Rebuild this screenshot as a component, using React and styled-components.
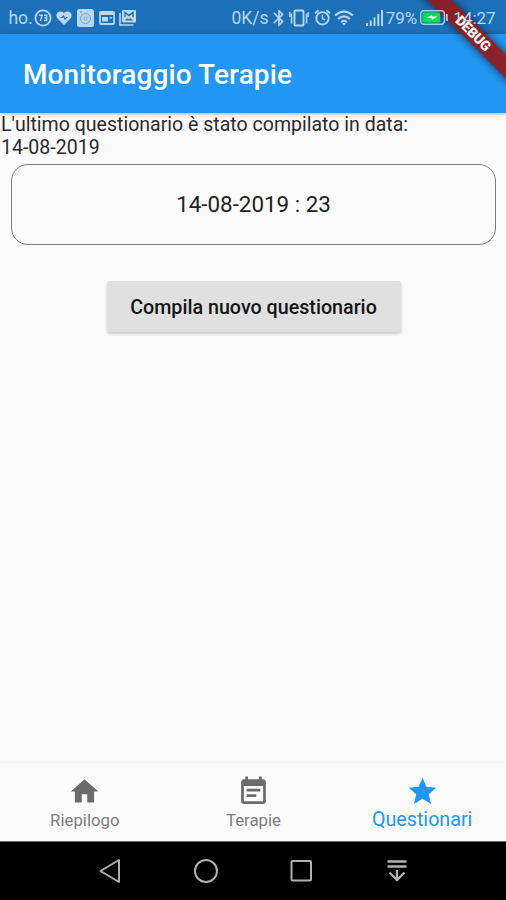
import React from "react";
import styled, { createGlobalStyle } from "styled-components";
import { MdHome, MdEventNote, MdStar, MdBluetooth } from "react-icons/md";

const GlobalStyle = createGlobalStyle`
  * {
    box-sizing: border-box;
  }

  body {
    margin: 0;
    background: #fafafa;
    font-family: Roboto, "Liberation Sans", sans-serif;
  }

  p, h1 {
    margin: 0;
  }

  svg {
    display: block;
    flex: none;
  }
`;

const Screen = styled.div`
  position: relative;
  display: flex;
  flex-direction: column;
  width: 506px;
  height: 900px;
  overflow: hidden;
  background: #fafafa;
`;

const StatusBarStyles = styled.header`
  display: flex;
  justify-content: space-between;
  height: 34px;
  padding: 0 11px 0 9px;
  background: #1b70b7;
  color: #b9d7f0;
`;

const StatusGroup = styled.div`
  position: relative;
  z-index: 2;
  display: flex;
  align-items: center;
  height: 35px;
`;

const StatusItem = styled.span`
  display: flex;
  justify-content: center;
  flex: none;
  width: ${(props) => props.$width}px;
  margin-left: ${(props) => props.$gap || 0}px;
  font-size: ${(props) => props.$size || 17.5}px;
  white-space: nowrap;
`;

const AppBar = styled.div`
  position: relative;
  display: flex;
  align-items: center;
  height: 79px;
  padding: 3px 0 0 23px;
  background: #2196f3;
  box-shadow: 0 1px 4px rgba(0, 0, 0, 0.3);

  h1 {
    color: white;
    font-size: 28px;
    font-weight: 500;
    line-height: 32px;
    letter-spacing: 0.12px;
    white-space: nowrap;
  }
`;

const Content = styled.main`
  display: flex;
  flex-direction: column;
  align-items: center;
  flex: 1;
`;

const LastEntry = styled.p`
  align-self: stretch;
  padding: 1px 0 0 1px;
  color: #2b2b2b;
  font-size: 19.55px;
  line-height: 22.5px;
`;

const EntryCard = styled.div`
  display: flex;
  align-items: center;
  justify-content: center;
  width: 485px;
  height: 81px;
  margin-top: 5px;
  padding: 0 0 2px 1px;
  border: 1.5px solid #808080;
  border-radius: 17px;
  color: #222;
  font-size: 22.4px;
`;

const RaisedButton = styled.button`
  width: 294px;
  height: 51px;
  margin: 36px 0 0 2px;
  padding: 1px 1px 0 0;
  border: 0;
  border-radius: 3px;
  background: #e0e0e0;
  box-shadow: 0 2px 3px rgba(0, 0, 0, 0.2);
  color: #151515;
  font-family: inherit;
  font-size: 19.7px;
  font-weight: 500;
  white-space: nowrap;
`;

const BottomNav = styled.nav`
  display: grid;
  grid-template-columns: repeat(3, 1fr);
  height: 78px;
  background: #fafafa;
  box-shadow: 0 -1px 2px rgba(0, 0, 0, 0.06);
`;

const NavItem = styled.a`
  display: flex;
  flex-direction: column;
  align-items: center;
  padding: 12px 0 0 1px;
  color: ${(props) => (props.$active ? "#2196f3" : "#6b6b6b")};

  span {
    margin-top: 1px;
    font-size: ${(props) => (props.$active ? 19.7 : 16.8)}px;
    line-height: 22px;
    color: ${(props) => (props.$active ? "#2196f3" : "#7d7d7d")};
  }
`;

const SystemNav = styled.footer`
  display: flex;
  align-items: center;
  gap: 69.5px;
  height: 59px;
  padding-left: 97px;
  border-top: 1px solid #666;
  background: black;
`;

const DebugBanner = styled.div`
  position: absolute;
  z-index: 1;
  top: 25px;
  left: 393px;
  width: 160px;
  height: 17px;
  transform: rotate(45deg);
  background: rgba(145, 26, 30, 0.95);
  box-shadow: 0 0 8px rgba(0, 0, 0, 0.65);
  color: white;
  font-size: 14px;
  font-weight: 900;
  line-height: 17px;
  letter-spacing: -0.3px;
  text-align: center;
`;

const BadgeIcon = () => (
  <svg width="18" height="18" viewBox="0 0 18 18" fill="none" stroke="currentColor">
    <circle cx="9" cy="9" r="7.6" strokeWidth="1.8" />
    <path d="M5 6.3h3.2L6.4 12M10 6.3h2.6v5.2H10M10.4 8.8h2.2" strokeWidth="1.4" />
  </svg>
);

const HeartIcon = () => (
  <svg width="16" height="16" viewBox="0 0 16 16">
    <path d="M8 15 1.5 8.4C-2 4.4 3.2-1 8 3c4.8-4 10 1.4 6.5 5.4Z" fill="currentColor" />
    <path d="M4.500 7.500H6L7.500 6l1.500 3 1.500-1.500h1" fill="none" stroke="#1b70b7" strokeWidth="1.2" />
  </svg>
);

const CameraIcon = () => (
  <svg width="17" height="18" viewBox="0 0 17 18">
    <rect width="17" height="18" rx="2.5" fill="currentColor" />
    <g fill="none" stroke="#6fa6d3">
      <circle cx="8.5" cy="9.5" r="5" />
      <circle cx="8.5" cy="9.5" r="1.5" />
      <path d="M3 3h2" strokeWidth="1.5" />
    </g>
  </svg>
);

const CardIcon = () => (
  <svg width="16" height="14" viewBox="0 0 16 14">
    <rect x="1" y="1" width="14" height="12" rx="1" fill="none" stroke="currentColor" strokeWidth="1.8" />
    <path d="M1 1h14v3H1ZM3 6h6v4.500H3ZM10.500 6h2.500v1.500h-2.500Z" fill="currentColor" />
  </svg>
);

const GalleryIcon = () => (
  <svg width="18" height="17" viewBox="0 0 18 17">
    <path d="M1 4v12h13.500" fill="none" stroke="currentColor" strokeWidth="1.6" />
    <rect x="3" y="1" width="14" height="12.5" rx="1" fill="currentColor" />
    <path d="M6 8V3.500L10 6.500l4-3V8" fill="none" stroke="#1b70b7" strokeWidth="1.4" />
    <path d="m6 11.500 2-2 2 1 1.500-1.500 2.500 2.500Z" fill="#1b70b7" />
  </svg>
);

const VibrationIcon = () => (
  <svg width="20" height="18" viewBox="0 0 20 18" fill="none" stroke="currentColor">
    <rect x="5.5" y="1.5" width="9" height="15" rx="1" strokeWidth="1.9" />
    <path d="M2.500 4.500v10M.7 3v5M17.500 4.500v10M19.300 3v5" strokeWidth="1.5" />
  </svg>
);

const AlarmIcon = () => (
  <svg width="17" height="17" viewBox="0 0 17 17" fill="none" stroke="currentColor">
    <circle cx="8.5" cy="9.3" r="6.2" strokeWidth="1.9" />
    <path d="M8.500 5.800v3.700l2.700 1.700" strokeWidth="1.4" />
    <path d="M1 4.300 4.600 1.200M16 4.300l-3.600-3.100" strokeWidth="1.8" />
  </svg>
);

const WifiIcon = () => (
  <svg width="20" height="16" viewBox="0 0 20 16" fill="none" stroke="currentColor" strokeWidth="2.1">
    <path d="M1 5.500q9-8 18 0M4 9q6-5.300 12 0M7 12q3-2.500 6 0" />
    <path d="m8 13 2 2.500 2-2.500Z" fill="currentColor" stroke="none" />
  </svg>
);

const SignalIcon = () => (
  <svg width="17" height="16" viewBox="0 0 17 16" stroke="currentColor" strokeWidth="1.9">
    <path d="M1 13v3M4.750 10.500V16M8.500 7.500V16M12.250 4V16M16 0v16" />
  </svg>
);

const BatteryIcon = () => (
  <svg width="28" height="15" viewBox="0 0 28 15">
    <rect x=".7" y=".7" width="23.6" height="13.6" rx="3" fill="none" stroke="#a9cbe7" strokeWidth="1.4" />
    <rect x="2.5" y="2.5" width="17.5" height="10" rx="1" fill="#08df50" />
    <path d="M6.500 7.500 12 5v1.500h5.500L12 10V8.500Z" fill="white" />
    <path d="M26.800 4v7" stroke="#a9cbe7" strokeWidth="2" />
  </svg>
);

const StatusBar = () => {
  return (
    <StatusBarStyles>
      <StatusGroup>
        <StatusItem $width={23}>ho.</StatusItem>
        <StatusItem $width={18} $gap={2}><BadgeIcon /></StatusItem>
        <StatusItem $width={16} $gap={4}><HeartIcon /></StatusItem>
        <StatusItem $width={17} $gap={5}><CameraIcon /></StatusItem>
        <StatusItem $width={16} $gap={5}><CardIcon /></StatusItem>
        <StatusItem $width={18} $gap={4}><GalleryIcon /></StatusItem>
      </StatusGroup>
      <StatusGroup>
        <StatusItem $width={36}>0K/s</StatusItem>
        <StatusItem $width={13} $gap={4}><MdBluetooth size={20} /></StatusItem>
        <StatusItem $width={20} $gap={4}><VibrationIcon /></StatusItem>
        <StatusItem $width={16} $gap={5}><AlarmIcon /></StatusItem>
        <StatusItem $width={20} $gap={4}><WifiIcon /></StatusItem>
        <StatusItem $width={17} $gap={12}><SignalIcon /></StatusItem>
        <StatusItem $width={31} $gap={3} $size={17}>79%</StatusItem>
        <StatusItem $width={28} $gap={3}><BatteryIcon /></StatusItem>
        <StatusItem $width={41} $gap={6} $size={17}>14:27</StatusItem>
      </StatusGroup>
    </StatusBarStyles>
  );
};

const navItems = [
  { label: "Riepilogo", icon: MdHome },
  { label: "Terapie", icon: MdEventNote },
  { label: "Questionari", icon: MdStar, active: true },
];

const App = () => {
  return (
    <>
      <GlobalStyle />
      <Screen>
        <StatusBar />
        <AppBar>
          <h1>Monitoraggio Terapie</h1>
        </AppBar>
        <Content>
          <LastEntry>
            L'ultimo questionario è stato compilato in data:
            <br />
            14-08-2019
          </LastEntry>
          <EntryCard>14-08-2019 : 23</EntryCard>
          <RaisedButton>Compila nuovo questionario</RaisedButton>
        </Content>
        <BottomNav>
          {navItems.map(({ label, icon: Icon, active }) => (
            <NavItem key={label} $active={active}>
              <Icon size={33} />
              <span>{label}</span>
            </NavItem>
          ))}
        </BottomNav>
        <SystemNav>
          <svg width="26" height="26" viewBox="0 0 26 26" fill="none" stroke="#b0b0b0" strokeWidth="2">
            <path d="M22 2v22L3.500 13Z" strokeLinejoin="round" />
          </svg>
          <svg width="26" height="26" viewBox="0 0 26 26" fill="none" stroke="#b0b0b0" strokeWidth="2">
            <circle cx="13" cy="13" r="11" />
          </svg>
          <svg width="26" height="26" viewBox="0 0 26 26" fill="none" stroke="#b0b0b0" strokeWidth="2">
            <rect x="3.5" y="3" width="19.5" height="19.5" rx="1" />
          </svg>
          <svg width="26" height="26" viewBox="0 0 26 26" fill="none" stroke="#b0b0b0" strokeWidth="2.4">
            <path d="M3.500 3.500h19M3.500 8.500h19M13 12v10M5.500 14.500l7.500 7.500 7.500-7.500" />
          </svg>
        </SystemNav>
        <DebugBanner>DEBUG</DebugBanner>
      </Screen>
    </>
  );
};

export default App;
